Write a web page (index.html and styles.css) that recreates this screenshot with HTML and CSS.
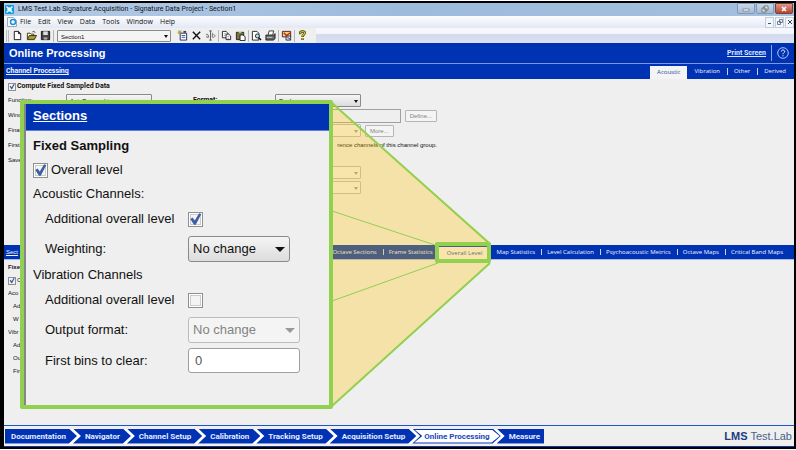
FILE: index.html
```
<!DOCTYPE html>
<html lang="en">
<head>
<meta charset="utf-8">
<title>LMS Test.Lab Signature Acquisition</title>
<link rel="stylesheet" href="styles.css">
</head>
<body>
<div class="window">
  <header class="titlebar">
    <svg class="app-icon" viewBox="0 0 9 9"><rect width="9" height="9" rx="1" fill="#0a9be0"/><circle cx="4.500" cy="4.500" r="2.200" fill="#d8f2ff"/><path d="M1.500 1.500l6 6M7.500 1.500l-6 6" stroke="#fff" stroke-width="1.300"/></svg>
    <h1 class="title">LMS Test.Lab Signature Acquisition - Signature Data Project - Section1</h1>
    <div class="controls">
      <button class="ctl" aria-label="Minimize"><svg viewBox="0 0 8 8"><path d="M1 4h6v2H1z" fill="#fff" stroke="#566" stroke-width=".6"/></svg></button>
      <button class="ctl" aria-label="Restore"><svg viewBox="0 0 8 8"><path d="M3 1h4v4H3zM1 3h4v4H1z" fill="#eee" stroke="#566" stroke-width=".8"/></svg></button>
      <button class="ctl ctl-close" aria-label="Close"><svg viewBox="0 0 8 8"><path d="M2 2l4 4M6 2L2 6" stroke="#fff" stroke-width="1.600"/></svg></button>
    </div>
  </header>

  <nav class="menubar">
    <svg class="doc-icon" viewBox="0 0 10 10"><path d="M.5 .5h6l3 3v6h-9z" fill="#fff" stroke="#9ab"/><circle cx="6" cy="5" r="2.500" fill="none" stroke="#1a8fe0" stroke-width="1.500"/></svg>
    <button>File</button><button>Edit</button><button>View</button><button>Data</button><button>Tools</button><button>Window</button><button>Help</button>
    <div class="mdi">
      <button aria-label="Minimize document"><svg viewBox="0 0 8 8"><path d="M2 5.500h3" stroke="#456"/></svg></button>
      <button aria-label="Restore document"><svg viewBox="0 0 8 8"><path d="M3.500 1.500h3v3h-3zM1.500 3.500h3v3h-3z" fill="#eef" stroke="#567" stroke-width=".8"/></svg></button>
      <button aria-label="Close document"><svg viewBox="0 0 8 8"><path d="M2 2l4 4M6 2L2 6" stroke="#345"/></svg></button>
    </div>
  </nav>

  <div class="toolbar">
    <div class="tools">
      <i class="grip"></i>
      <button aria-label="New"><svg viewBox="0 0 12 12"><path d="M2.500 1.500h4.500l2.500 2.500v6.500h-7zM7 1.500V4h2.500" fill="#fff" stroke="#111"/></svg></button>
      <button aria-label="Open"><svg viewBox="0 0 12 12"><path d="M1.500 10V3.500h3l1 1h3V6" fill="#ffd" stroke="#331"/><path d="M1.500 10.500l2-4.500h8l-2.500 4.500z" fill="#a99a30" stroke="#331"/><path d="M7 2c1.500-1 2.500-.5 3 1" fill="none" stroke="#111" stroke-width=".8"/></svg></button>
      <button aria-label="Save"><svg viewBox="0 0 12 12"><path d="M1.500 1.500h9v9h-9z" fill="#444" stroke="#111"/><path d="M3.500 1.500h5v4h-5z" fill="#ddd"/><path d="M4 8h4v2.500H4z" fill="#aaa"/></svg></button>
      <i class="sep"></i>
      <span class="pick section-pick"><select aria-label="Section"><option>Section1</option></select></span>
      <button aria-label="New section"><svg viewBox="0 0 12 12"><path d="M3.500 3.500h7v7.500h-7z" fill="#fff" stroke="#226"/><path d="M5 6h4M5 8h4" stroke="#358"/><path d="M3 0v5M.5 2.500h5M1 .8l4 3.500M5 .8L1 4.300" stroke="#a89820" stroke-width=".8"/><path d="M7 1h3v2H7z" fill="#347"/></svg></button>
      <button aria-label="Delete"><svg viewBox="0 0 12 12"><path d="M2 2l8 8M10 2L2 10" stroke="#111" stroke-width="1.500"/></svg></button>
      <button aria-label="Rename"><svg viewBox="0 0 12 12"><path d="M6 1v10M4.500 1h3M4.500 11h3" stroke="#555"/><path d="M1 5c2-1 3 0 3 3-3 .8-3.500-1.500 0-1.500M8 3v5c4 .5 4-4 0-2.500" fill="none" stroke="#777"/></svg></button>
      <i class="sep"></i>
      <button aria-label="Copy"><svg viewBox="0 0 12 12"><path d="M1.500 1.500h4l2 2v5h-6z" fill="#fff" stroke="#222"/><path d="M5.500 4.500h3l2 2v4h-5z" fill="#fff" stroke="#222"/><path d="M3 4h2M3 6h2M7 7h2M7 9h2" stroke="#779" stroke-width=".7"/></svg></button>
      <button aria-label="Paste"><svg viewBox="0 0 12 12"><path d="M1.500 2.500h8v8h-8z" fill="#7c7438" stroke="#222"/><path d="M4 1h3v2H4z" fill="#ddb"/><path d="M5.500 5.500h3.500l2 2v4H5.500z" fill="#fff" stroke="#222"/></svg></button>
      <i class="sep"></i>
      <button aria-label="Preview"><svg viewBox="0 0 12 12"><path d="M1.500 1.500h5l2 2v7.500h-7z" fill="#fff" stroke="#222"/><circle cx="7" cy="6.500" r="2.200" fill="#aee0ee" stroke="#222"/><path d="M8.500 8.500l2.500 2.500" stroke="#111" stroke-width="1.500"/></svg></button>
      <button aria-label="Print"><svg viewBox="0 0 12 12"><path d="M3.500 5l1-4h5l-1 4" fill="#fff" stroke="#333"/><path d="M1 5.500h8.500L11 4v5l-1.500 2H1z" fill="#666" stroke="#222"/><path d="M2 8h6" stroke="#ccc"/></svg></button>
      <i class="sep"></i>
      <button aria-label="Display"><svg viewBox="0 0 12 12"><path d="M1.500 1.500h9v6h-9z" fill="#f4d870" stroke="#422"/><path d="M3 3l3 3 4-3" fill="none" stroke="#c22" stroke-width="1.500"/><path d="M5.500 6.500h5v4.500h-5z" fill="#ddd" stroke="#333"/><path d="M6 7l5 4" stroke="#33a"/></svg></button>
      <i class="sep"></i>
      <button aria-label="Help"><svg viewBox="0 0 12 12"><path d="M3.500 4.500V3c0-2 5-2 5 0 0 2-2.500 2-2.500 4.500M6 9v2" fill="none" stroke="#332f00" stroke-width="2.600"/><path d="M3.500 4V3c0-1.800 5-1.800 5 0 0 2-2.500 2-2.500 4M6 9.300v1.300" fill="none" stroke="#d9cb20" stroke-width="1.300"/></svg></button>
    </div>
  </div>

  <div class="banner">
    <h2>Online Processing</h2>
    <a class="print" href="#">Print Screen</a>
    <button class="help" aria-label="Help"><svg viewBox="0 0 12 12"><circle cx="6" cy="6" r="5.300" fill="none" stroke="#dfe6ff" stroke-width=".8"/><path d="M4.300 4.500c0-2 3.400-2 3.400 0 0 1.200-1.700 1.200-1.700 2.700M6 8.300v1" fill="none" stroke="#fff" stroke-width="1"/></svg></button>
  </div>

  <div class="bar">
    <a class="bar-link" href="#">Channel Processing</a>
    <div class="tabs"><button class="on">Acoustic</button><button>Vibration</button><button>Other</button><button>Derived</button></div>
  </div>

  <main class="channel">
    <label class="check strong"><input type="checkbox" checked>Compute Fixed Sampled Data</label>
    <div class="form">
      <div class="col-labels">
        <label for="function">Function:</label>
        <span>Wind</span>
        <span>Final</span>
        <span>First</span>
        <span>Save</span>
      </div>
      <div class="col-function"><span class="pick"><select id="function"><option>AutoPowers Linear</option></select></span></div>
      <div class="col-format"><label class="strong" for="format">Format:</label></div>
      <div class="col-fields">
        <div class="line"><span class="pick"><select id="format"><option>Peak</option></select></span></div>
        <div class="line"><input class="text" aria-label="Window" disabled><button class="btn" disabled>Define...</button></div>
        <div class="line"><span class="pick"><select aria-label="Final" disabled><option></option></select></span><button class="btn" disabled>More...</button></div>
        <p class="line note">rence channels of this channel group.</p>
        <div class="line late"><span class="pick"><select aria-label="Save first" disabled><option></option></select></span></div>
        <div class="line"><span class="pick"><select aria-label="Save second" disabled><option></option></select></span></div>
      </div>
    </div>
  </main>

  <div class="bar lower">
    <a class="bar-link light" href="#">Sect</a>
    <div class="tabs"><button>Octave Sections</button><button>Frame Statistics</button><button class="on">Overall Level</button><button>Map Statistics</button><button>Level Calculation</button><button>Psychoacoustic Metrics</button><button>Octave Maps</button><button>Critical Band Maps</button></div>
  </div>

  <section class="levels">
    <b>Fixe</b>
    <label class="check"><input type="checkbox" checked>O</label>
    <span>Aco</span>
    <span class="sub">Ad</span>
    <span class="sub">W</span>
    <span>Vibr</span>
    <span class="sub">Ad</span>
    <span class="sub">Ou</span>
    <span class="sub">Fir</span>
  </section>

  <footer class="footer">
    <nav class="steps">
      <a href="#"><span>Documentation</span></a><a href="#"><span>Navigator</span></a><a href="#"><span>Channel Setup</span></a><a href="#"><span>Calibration</span></a><a href="#"><span>Tracking Setup</span></a><a href="#"><span>Acquisition Setup</span></a><a href="#" class="now"><span>Online Processing</span></a><a href="#"><span>Measure</span></a>
    </nav>
    <div class="brand"><b>LMS</b> Test.Lab</div>
  </footer>
</div>

<svg class="beam" viewBox="0 0 180 320" aria-hidden="true">
  <path d="M12 14L170 153V174L12 317z" fill="#ffc208" fill-opacity=".3"/>
  <path d="M12 14L170 155M170 174L12 317" fill="none" stroke="#92d050" stroke-width="2"/>
  <path d="M12 122L118 157M118 174L12 212" fill="none" stroke="#92d050"/>
  <rect x="117" y="155" width="52" height="17" fill="none" stroke="#92d050" stroke-width="4" stroke-linejoin="round"/>
</svg>

<section class="callout">
  <h3><a href="#">Sections</a></h3>
  <form class="callout-body">
    <b>Fixed Sampling</b>
    <label class="check"><input type="checkbox" checked>Overall level</label>
    <p>Acoustic Channels:</p>
    <div class="field"><label for="a-add">Additional overall level</label><input id="a-add" type="checkbox" checked></div>
    <div class="field tall"><label for="weight">Weighting:</label><span class="pick narrow"><select id="weight"><option>No change</option></select></span></div>
    <p>Vibration Channels</p>
    <div class="field"><label for="v-add">Additional overall level</label><input id="v-add" type="checkbox"></div>
    <div class="field tall"><label for="out">Output format:</label><span class="pick"><select id="out" disabled><option>No change</option></select></span></div>
    <div class="field tall"><label for="bins">First bins to clear:</label><input id="bins" class="text" type="text" value="0"></div>
  </form>
</section>
</body>
</html>
```
FILE: styles.css
```
* { box-sizing: border-box; }
html, body { height: 100%; }
body {
  margin: 0;
  padding: 1px 0;
  background: #fff;
  font: 6px/13px "Liberation Sans", Arial, sans-serif;
  color: #111;
}
h1, h2, h3, p { margin: 0; font-size: inherit; font-weight: normal; }
button, select, input { font: inherit; color: inherit; margin: 0; padding: 0; }
button { border: 0; background: none; }
svg { display: block; }
a { color: inherit; }

.window {
  display: flex;
  flex-direction: column;
  min-height: 100%;
  border: 2px solid #000;
  border-left-width: 4px;
  background: #efefef;
}

/* title bar */
.titlebar {
  display: flex;
  align-items: center;
  height: 13px;
  padding: 0 1px;
  background: linear-gradient(90deg, #b3cbe6, #9dbbdc 50%, #a3bfdc);
}
.app-icon { width: 9px; height: 9px; }
.title { margin-left: 4px; font: 7px/13px Roboto, sans-serif; }
.controls { display: flex; gap: 1px; margin-left: auto; align-self: flex-start; }
.ctl {
  display: grid;
  place-items: center;
  width: 18px;
  height: 11px;
  border: 1px solid #8299b3;
  border-radius: 0 0 2px 2px;
  background: linear-gradient(#c8d8ea, #a4bbd3);
}
.ctl svg { width: 8px; height: 8px; }
.ctl-close { border-color: #7d4038; background: linear-gradient(#d99a8c, #bb432c); }

/* menu bar */
.menubar {
  display: flex;
  align-items: center;
  gap: 7px;
  height: 12px;
  padding-left: 3px;
  background: linear-gradient(#fcfdff, #e3e8f4);
  font: 7px/12px "Open Sans", sans-serif;
}
.doc-icon { width: 10px; height: 10px; margin-right: -4px; }
.mdi { display: flex; gap: 1px; margin-left: auto; }
.mdi button { display: grid; place-items: center; width: 9px; height: 11px; border: 1px solid #c3cddd; background: #f3f6fb; }
.mdi svg { width: 8px; height: 8px; }

/* toolbar */
.toolbar { height: 15px; background: linear-gradient(#f6f7fc 35%, #d2d8ee 45%, #dde2f3); }
.tools { display: flex; align-items: center; width: 312px; height: 15px; gap: 3px; padding-left: 2px; background: #efefef; }
.tools button svg { width: 11px; height: 11px; }
.sep { width: 1px; height: 12px; margin: 0 -1px; background: #b5b5b5; }
.grip { width: 3px; height: 12px; border: solid #bbb; border-width: 0 1px; }

/* banner and section bars */
.banner {
  display: flex;
  align-items: center;
  height: 21px;
  padding: 0 5px;
  background: #0033b4;
  border-bottom: 1px solid #7f98dc;
  color: #fff;
}
.banner h2 { font-size: 11px; font-weight: bold; }
.print { margin-left: auto; font: bold 7px/12px Roboto, sans-serif; color: #dfe6ff; }
.help { margin-left: 5px; padding-left: 5px; border-left: 1px solid #8fa5e2; }
.help svg { width: 12px; height: 16px; }
.bar {
  display: flex;
  align-items: stretch;
  height: 15px;
  padding: 0 1px 0 2px;
  background: #0033b4;
  color: #f0f4ff;
}
.bar-link { font: bold 7px/14px Roboto, sans-serif; }
.light { font: 6px/15px "Liberation Sans", sans-serif; }
.tabs { display: flex; margin-left: auto; font: 6px/13px "Open Sans", sans-serif; }
.tabs button { position: relative; padding: 0 7px; }
.tabs button + button::before {
  content: "";
  position: absolute;
  left: 0;
  top: 4px;
  bottom: 4px;
  width: 1px;
  background: #c4d0f5;
}
.tabs .on { margin-top: 2px; background: #f4f4f4; color: #24489f; }
.tabs .on::before, .tabs .on + button::before { display: none; }
.lower { padding-right: 5px; border-bottom: 1px solid #a8b9ea; }
.lower button { padding: 0 6px; }
.lower .on { padding: 0 8px; }

/* shared controls */
.strong { font: bold 7px/13px Roboto, sans-serif; }
.check { display: flex; align-items: center; gap: 1px; }
input[type="checkbox"] {
  appearance: none;
  display: grid;
  flex: none;
  width: 8px;
  height: 8px;
  border: 1px solid #8e8f8f;
  background: #f4f4f4;
}
input[type="checkbox"]:checked::before {
  content: "";
  background: #3f5fa5;
  clip-path: polygon(10% 50%, 28% 38%, 44% 62%, 78% 5%, 95% 12%, 52% 95%, 38% 95%);
}
.pick { position: relative; display: block; width: 86px; height: 13px; }
.pick select {
  appearance: none;
  display: block;
  width: 100%;
  height: 100%;
  padding: 0 3px;
  border: 1px solid #8a8a8a;
  border-radius: 1px;
  background: linear-gradient(#f5f5f5, #dcdcdc);
}
.pick::after {
  content: "";
  position: absolute;
  right: 3px;
  top: 50%;
  margin-top: -1px;
  border: 2px solid transparent;
  border-top: 3px solid #111;
  border-bottom: 0;
}
.pick select:disabled { border-color: #bcbcbc; background: #f4f4f4; color: #838383; opacity: 1; }
.pick:has(:disabled)::after { border-top-color: #999; }
.section-pick { flex: none; width: 114px; height: 12px; margin: 0 3px 0 1px; }
.section-pick select { background: #f4f4f4; }
.text { border: 1px solid #a0a0a0; background: #efefef; }
.btn { height: 12px; padding: 0 4px; border: 1px solid #b6b6b6; border-radius: 1px; background: #f4f4f4; color: #838383; line-height: 10px; }

/* channel processing form */
.channel { flex: 0 0 166px; padding: 1px 4px 2px; }
.form { display: flex; }
.col-labels { display: grid; grid-auto-rows: 15px; width: 58px; line-height: 15px; align-content: start; }
.col-function { width: 127px; padding-top: 1px; }
.col-format { width: 82px; line-height: 15px; }
.line { display: flex; align-items: center; gap: 4px; height: 15px; }
.line .text { width: 127px; height: 14px; }
.late { margin-top: 12px; }
.note { justify-content: flex-end; }
.col-fields { width: 162px; }

/* sections form behind the callout */
.levels { display: flex; flex-direction: column; flex: 1; padding: 1px 4px; }
.sub { padding-left: 5px; }

/* workflow footer */
.footer {
  display: flex;
  align-items: center;
  height: 22px;
  padding: 0 2px 0 1px;
  border-top: 1px solid #1f55cc;
  border-bottom: 1px solid #123a9c;
}
.steps { display: flex; height: 15px; background: #fff; font: bold 8px/15px Roboto, sans-serif; }
.steps a {
  position: relative;
  padding: 0 11px 0 12px;
  margin-left: -4px;
  background: #0033b4;
  color: #e6ecff;
  text-decoration: none;
  clip-path: polygon(0 0, calc(100% - 8px) 0, 100% 50%, calc(100% - 8px) 100%, 0 100%, 8px 50%);
}
.steps a:first-child { margin-left: 0; padding-left: 6px; clip-path: polygon(0 0, calc(100% - 8px) 0, 100% 50%, calc(100% - 8px) 100%, 0 100%); }
.steps a:last-child { padding-right: 4px; clip-path: polygon(0 0, 100% 0, 100% 100%, 0 100%, 8px 50%); }
.steps span { position: relative; }
.steps .now { color: #1b48bd; }
.steps .now::before {
  content: "";
  position: absolute;
  inset: 1px;
  background: #fff;
  clip-path: polygon(1px 0, calc(100% - 8px) 0, 100% 50%, calc(100% - 8px) 100%, 1px 100%, 9px 50%);
}
.brand { margin-left: auto; font-size: 11px; color: #4a5f8c; }
.brand b { color: #1d3c80; }

/* magnified callout */
.beam { position: absolute; left: 320px; top: 89px; width: 180px; height: 320px; }
.callout {
  position: absolute;
  left: 20px;
  top: 100px;
  width: 313px;
  height: 309px;
  border: 4px solid #92d050;
  border-radius: 2px;
  background: #efefef;
  box-shadow: inset 2px 0 #85868c;
  font-size: 13px;
  line-height: 20px;
}
.callout h3 {
  height: 27px;
  margin-left: 2px;
  padding-left: 7px;
  background: #0033b4;
  border-bottom: 1px solid #5f7fd6;
  color: #fff;
  font-weight: bold;
  line-height: 24px;
}
.callout-body { display: flex; flex-direction: column; padding: 4px 9px; }
.callout b { line-height: 22px; }
.callout .check { height: 26px; gap: 3px; }
.callout p { height: 22px; line-height: 22px; }
.callout input[type="checkbox"] { width: 15px; height: 15px; box-shadow: inset 0 0 0 1px #fff, inset 0 0 0 2px #ccc; }
.field { display: grid; grid-template-columns: 143px 112px; align-items: center; height: 28px; padding-left: 12px; }
.field.tall { height: 31px; }
.callout .pick { width: 112px; height: 26px; }
.callout .narrow { width: 102px; }
.callout .pick select { padding: 0 4px; border-radius: 3px; }
.callout .pick::after { right: 5px; margin-top: -2px; border-width: 5px 5px 0; }
.callout .text { height: 25px; padding: 0 6px; border-radius: 3px; background: #fff; color: #555; }
```
